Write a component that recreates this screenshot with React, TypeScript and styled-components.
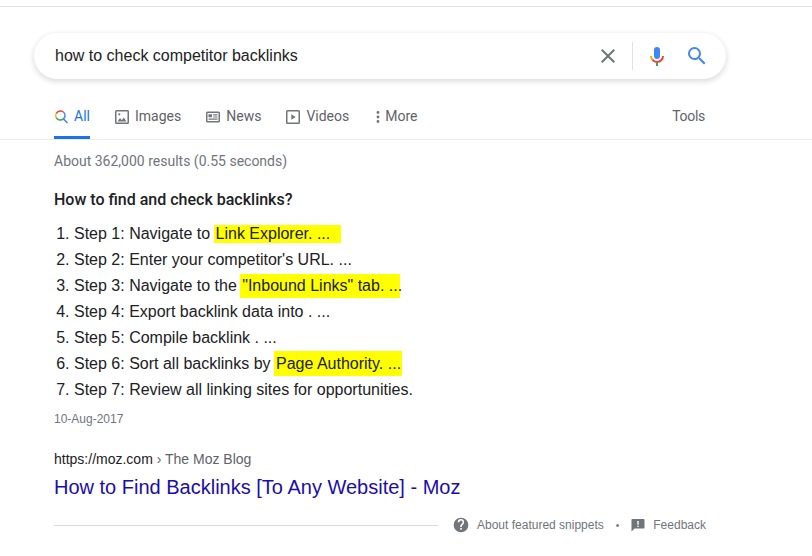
import styled, { createGlobalStyle } from "styled-components";

const steps = [
  { text: "Step 1: Navigate to ", mark: "Link Explorer. ...", markHeight: 18, markWidth: 127 },
  { text: "Step 2: Enter your competitor's URL. ..." },
  { text: "Step 3: Navigate to the ", mark: '"Inbound Links" tab. ...', markHeight: 24, markWidth: 160 },
  { text: "Step 4: Export backlink data into . ..." },
  { text: "Step 5: Compile backlink . ..." },
  { text: "Step 6: Sort all backlinks by ", mark: "Page Authority. ...", markHeight: 25, markWidth: 128 },
  { text: "Step 7: Review all linking sites for opportunities." },
];

const App = () => (
  <>
    <GlobalStyle />
    <TopRule />
    <SearchRow>
      <SearchBox>
        <Query>how to check competitor backlinks</Query>
        <IconButton aria-label="Clear">
          <svg width="24" height="24" viewBox="0 0 24 24">
            <path
              fill="#70757a"
              d="M19 6.41 17.59 5 12 10.59 6.41 5 5 6.41 10.59 12 5 17.59 6.41 19 12 13.41 17.59 19 19 17.59 13.41 12z"
            />
          </svg>
        </IconButton>
        <Divider />
        <MicIcon />
        <IconButton aria-label="Search">
          <svg width="24" height="24" viewBox="0 0 24 24">
            <path
              fill="#4285f4"
              d="M15.5 14h-.79l-.28-.27A6.47 6.47 0 0 0 16 9.5 6.5 6.5 0 1 0 9.5 16c1.61 0 3.09-.59 4.23-1.57l.27.28v.79l5 4.99L20.49 19l-4.99-5zm-6 0C7.01 14 5 11.99 5 9.5S7.01 5 9.5 5 14 7.01 14 9.5 11.99 14 9.5 14z"
            />
          </svg>
        </IconButton>
      </SearchBox>
    </SearchRow>
    <TabBar>
      <AllTab $active>
        <ColorSearchIcon />
        All
      </AllTab>
      <Tab>
        <svg width="14" height="14" viewBox="1 1 14 14">
          <path
            fill="#70757a"
            d="M2.500 1h11A1.500 1.500 0 0 1 15 2.500v11a1.500 1.500 0 0 1-1.500 1.500h-11A1.500 1.500 0 0 1 1 13.500v-11A1.500 1.500 0 0 1 2.500 1zm0 1.500v11h11v-11h-11z"
          />
          <path fill="#70757a" d="M3.500 12.500 6 9l1.800 2.200L9.800 8.500l2.700 4z" />
          <circle fill="#70757a" cx="5.300" cy="5.300" r="1.100" />
        </svg>
        Images
      </Tab>
      <Tab>
        <svg width="14" height="14" viewBox="1 1 14 14">
          <path
            fill="#70757a"
            d="M2.500 2.500h11A1.500 1.500 0 0 1 15 4v8a1.500 1.500 0 0 1-1.500 1.500h-11A1.500 1.500 0 0 1 1 12V4a1.500 1.500 0 0 1 1.500-1.500zM2.500 4v8h11V4h-11z"
          />
          <path fill="#70757a" d="M3.500 5.200h3.500v3H3.500zM8.200 5.200h4.300v1.200H8.200zM8.200 7.400h4.300v1.200H8.200zM3.500 9.500h9v1.200h-9z" />
        </svg>
        News
      </Tab>
      <Tab>
        <svg width="14" height="14" viewBox="1 1 14 14">
          <path
            fill="#70757a"
            d="M2.500 1h11A1.500 1.500 0 0 1 15 2.500v11a1.500 1.500 0 0 1-1.500 1.500h-11A1.500 1.500 0 0 1 1 13.500v-11A1.500 1.500 0 0 1 2.500 1zm0 1.500v11h11v-11h-11z"
          />
          <path fill="#70757a" d="M6.300 5.200 10.700 8l-4.400 2.800z" />
        </svg>
        Videos
      </Tab>
      <MoreTab>
        <svg width="4" height="14" viewBox="0 0 4 14">
          <circle fill="#70757a" cx="2" cy="2.500" r="1.400" />
          <circle fill="#70757a" cx="2" cy="7" r="1.400" />
          <circle fill="#70757a" cx="2" cy="11.500" r="1.400" />
        </svg>
        More
      </MoreTab>
      <ToolsTab>Tools</ToolsTab>
    </TabBar>
    <Results>
      <Stats>About 362,000 results (0.55 seconds)</Stats>
      <SnippetTitle>How to find and check backlinks?</SnippetTitle>
      <StepList>
        {steps.map((step) => (
          <li key={step.text}>
            {step.text}
            {step.mark && (
              <Mark $height={step.markHeight} $width={step.markWidth}>
                {step.mark}
              </Mark>
            )}
          </li>
        ))}
      </StepList>
      <DateLine>10-Aug-2017</DateLine>
      <Cite>
        https://moz.com <Crumb>› The Moz Blog</Crumb>
      </Cite>
      <TitleLink href="#">How to Find Backlinks [To Any Website] - Moz</TitleLink>
      <Footer>
        <FooterRule />
        <FooterLink>
          <svg width="16" height="16" viewBox="0 0 24 24">
            <path
              fill="#70757a"
              d="M12 1a11 11 0 1 0 0 22 11 11 0 0 0 0-22zm1.200 18h-2.400v-2.400h2.400V19zm2.500-8.300-1.100 1.100c-.9.900-1.400 1.600-1.400 3.200h-2.400v-.6c0-1.300.5-2.500 1.400-3.400l1.500-1.500c.4-.4.700-1 .7-1.700a2.400 2.400 0 0 0-4.800 0H7a4.800 4.800 0 0 1 9.600 0c0 1.100-.4 2.100-.9 2.900z"
            />
          </svg>
          About featured snippets
        </FooterLink>
        <Dot>•</Dot>
        <FooterLink>
          <svg width="14" height="14" viewBox="0 0 14 14">
            <path fill="#70757a" d="M1.200 1h11.600c.4 0 .7.300.7.700v8.100c0 .4-.3.700-.7.700H3.500L.5 13.500V1.700c0-.4.300-.7.700-.7z" />
            <path fill="#fff" d="M6.300 3h1.400v3.800H6.300zM6.300 7.700h1.400v1.400H6.300z" />
          </svg>
          Feedback
        </FooterLink>
      </Footer>
    </Results>
  </>
);

const MicIcon = () => (
  <MicSlot>
    <svg width="24" height="24" viewBox="0 0 24 24">
      <path fill="#4285f4" d="M12 15a3 3 0 0 0 3-3V6a3 3 0 0 0-6 0v6a3 3 0 0 0 3 3z" />
      <path fill="#34a853" d="M11 18.900h2V22h-2z" />
      <path fill="#f4b400" d="M7 12H5c0 1.700.7 3.300 1.800 4.500l1.400-1.400A4.900 4.900 0 0 1 7 12z" />
      <path fill="#ea4335" d="M12 17c-1.500 0-2.900-.7-3.800-1.900l-1.400 1.400A7 7 0 0 0 12 19a7 7 0 0 0 7-7h-2a5 5 0 0 1-5 5z" />
    </svg>
  </MicSlot>
);

const ColorSearchIcon = () => (
  <svg width="16" height="16" viewBox="0 0 24 24" fill="none" strokeWidth="2.300">
    <path stroke="#4285f4" d="m15 15 6.500 6.500" />
    <path stroke="#ea4335" d="M3.400 6.500A7.700 7.700 0 0 1 16 5" />
    <path stroke="#fbbc05" d="M3.400 6.500a7.700 7.700 0 0 0 0 6.500" />
    <path stroke="#34a853" d="M3.400 13A7.700 7.700 0 0 0 15 15" />
    <path stroke="#4285f4" d="M15 15a7.700 7.700 0 0 0 1-10" />
  </svg>
);

const GlobalStyle = createGlobalStyle`
  html, body {
    margin: 0;
    background: #fff;
    font-family: "Liberation Sans", Arial, sans-serif;
  }
`;

const TopRule = styled.div`
  height: 1px;
  margin-top: 6px;
  background: #dfe1e5;
`;

const SearchRow = styled.div`
  padding: 26px 0 0 34px;
`;

const SearchBox = styled.div`
  width: 692px;
  height: 46px;
  box-sizing: border-box;
  padding: 0 17px 0 21px;
  display: flex;
  align-items: center;
  border-radius: 23px;
  background: #fff;
  box-shadow: 0 2px 5px 1px rgba(64, 60, 67, 0.16);
`;

const Query = styled.div`
  flex: 1;
  font-size: 16px;
  color: #222;
`;

const IconButton = styled.span`
  display: flex;
  width: 24px;
  height: 24px;
`;

const Divider = styled.span`
  width: 1px;
  height: 28px;
  margin: 0 12px;
  background: #dfe1e5;
`;

const MicSlot = styled.span`
  display: flex;
  margin-right: 16px;
`;

const TabBar = styled.nav`
  height: 61px;
  box-sizing: border-box;
  padding-left: 54px;
  display: flex;
  align-items: flex-end;
  border-bottom: 1px solid #ebebeb;
`;

const Tab = styled.a<{ $active?: boolean }>`
  height: 32px;
  box-sizing: border-box;
  margin-right: 25px;
  display: flex;
  align-items: flex-start;
  gap: 6px;
  font-family: Roboto, "Liberation Sans", sans-serif;
  font-size: 14px;
  line-height: 18px;
  color: ${(p) => (p.$active ? "#1a73e8" : "#5f6368")};
  border-bottom: 3px solid ${(p) => (p.$active ? "#1a73e8" : "transparent")};

  svg {
    margin-top: ${(p) => (p.$active ? 2 : 3)}px;
  }
`;

const AllTab = styled(Tab)`
  width: 36px;
  gap: 5px;
`;

const MoreTab = styled(Tab)`
  gap: 5px;
  margin-left: 2px;
`;

const ToolsTab = styled(Tab)`
  margin: 0 107px 0 auto;
  letter-spacing: -0.3px;
`;

const Results = styled.main`
  padding: 12px 0 0 54px;
`;

const Stats = styled.div`
  font-family: Roboto, "Liberation Sans", sans-serif;
  font-size: 14px;
  line-height: 18px;
  color: #70757a;
`;

const SnippetTitle = styled.h2`
  margin: 20px 0 0;
  font-family: Roboto, "Liberation Sans", sans-serif;
  font-size: 16px;
  font-weight: 500;
  line-height: 20px;
  color: #202124;
`;

const StepList = styled.ol`
  margin: 11px 0 0;
  padding: 0 0 0 20px;
  font-size: 16px;
  line-height: 26px;
  color: #202124;

  li {
    white-space: pre;
  }
`;

const Mark = styled.span<{ $height?: number; $width?: number }>`
  display: inline-block;
  box-sizing: border-box;
  width: ${(p) => p.$width}px;
  margin-left: -1px;
  padding-left: 2px;
  line-height: ${(p) => p.$height}px;
  background: #ff0;
  white-space: pre;
`;

const DateLine = styled.div`
  margin-top: 8px;
  font-size: 12px;
  line-height: 16px;
  color: #70757a;
`;

const Cite = styled.div`
  margin-top: 23px;
  font-size: 14px;
  line-height: 18px;
  color: #202124;
`;

const Crumb = styled.span`
  color: #5f6368;
`;

const TitleLink = styled.a`
  display: block;
  margin-top: 6px;
  font-size: 20px;
  line-height: 26px;
  color: #1a0dab;
  text-decoration: none;
`;

const Footer = styled.footer`
  margin-top: 17px;
  display: flex;
  align-items: center;
  font-size: 12px;
  color: #70757a;
`;

const FooterRule = styled.div`
  width: 384px;
  height: 1px;
  margin-right: 15px;
  background: #dadce0;
`;

const FooterLink = styled.span`
  display: flex;
  align-items: center;
  gap: 8px;
`;

const Dot = styled.span`
  margin: 0 12px;
  font-size: 10px;
`;

export default App;
